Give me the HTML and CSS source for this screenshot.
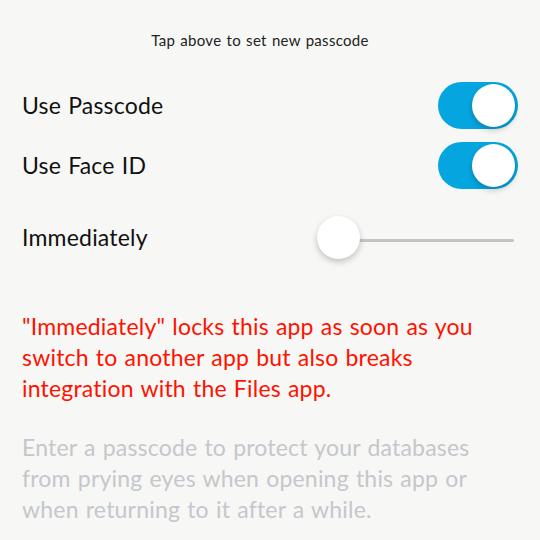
FILE: index.html
```html
<!DOCTYPE html>
<html lang="en">
<head>
    <meta charset="UTF-8">
    <meta name="viewport" content="width=device-width, initial-scale=1.0">
    <title>Passcode</title>
    <link rel="stylesheet" href="styles.css">
</head>
<body>
    <div id="page">
        <div class="hint">Tap above to set new passcode</div>

        <div class="row">
            <span class="label">Use Passcode</span>
            <div class="toggle on"><div class="knob"></div></div>
        </div>
        <div class="row">
            <span class="label">Use Face ID</span>
            <div class="toggle on"><div class="knob"></div></div>
        </div>
        <div class="row slider-row">
            <span class="label">Immediately</span>
            <div class="slider">
                <div class="track"></div>
                <div class="thumb"></div>
            </div>
        </div>

        <p class="note warn">"Immediately" locks this app as soon as you<br>switch to another app but also breaks<br>integration with the Files app.</p>
        <p class="note info">Enter a passcode to protect your databases<br>from prying eyes when opening this app or<br>when returning to it after a while.</p>
    </div>
</body>
</html>
```

FILE: styles.css
```css
*{margin: 0px;padding: 0px;box-sizing: border-box;}
body{
    background-color: #f7f7f5;
    font-family: "Lato", "Noto Sans", sans-serif;
    color: #111;
}
#page{
    width: 540px;
    height: 540px;
    overflow: hidden;
}
.hint{
    padding-top: 30px;
    padding-right: 20px;
    font-size: 15px;
    line-height: 20px;
    letter-spacing: 0.3px;
    word-spacing: 1px;
    text-align: center;
    color: #222;
}
.row{
    height: 60px;
    padding: 0 22px;
    display: flex;
    align-items: center;
    justify-content: space-between;
}
.hint + .row{margin-top: 25px;}
.label{
    font-size: 23px;
    letter-spacing: 0.2px;
    word-spacing: 1px;
}
.toggle{
    width: 80px;
    height: 47px;
    border-radius: 24px;
    background-color: #05a6e0;
    display: flex;
    align-items: center;
    justify-content: flex-end;
    padding-right: 3px;
}
.knob, .thumb{
    width: 43px;
    height: 43px;
    border-radius: 50%;
    background-color: #fff;
    box-shadow: 0 3px 6px rgba(0,0,0,0.22);
}
.slider-row{margin-top: 12px;}
.slider{
    width: 197px;
    height: 43px;
    margin-right: 4px;
    position: relative;
    display: flex;
    align-items: center;
}
.track{
    width: 100%;
    height: 3px;
    background-color: #c4c4c4;
    border-radius: 2px;
    margin-top: 6px;
}
.thumb{
    position: absolute;
    left: 0;
    top: 0;
}
.note{
    padding: 0 22px;
    font-size: 23px;
    line-height: 31px;
    letter-spacing: 0.2px;
    word-spacing: 1px;
    white-space: nowrap;
}
.warn{
    color: #ff1200;
    margin-top: 44px;
}
.info{
    color: #c4c7cb;
    margin-top: 28px;
}
```
